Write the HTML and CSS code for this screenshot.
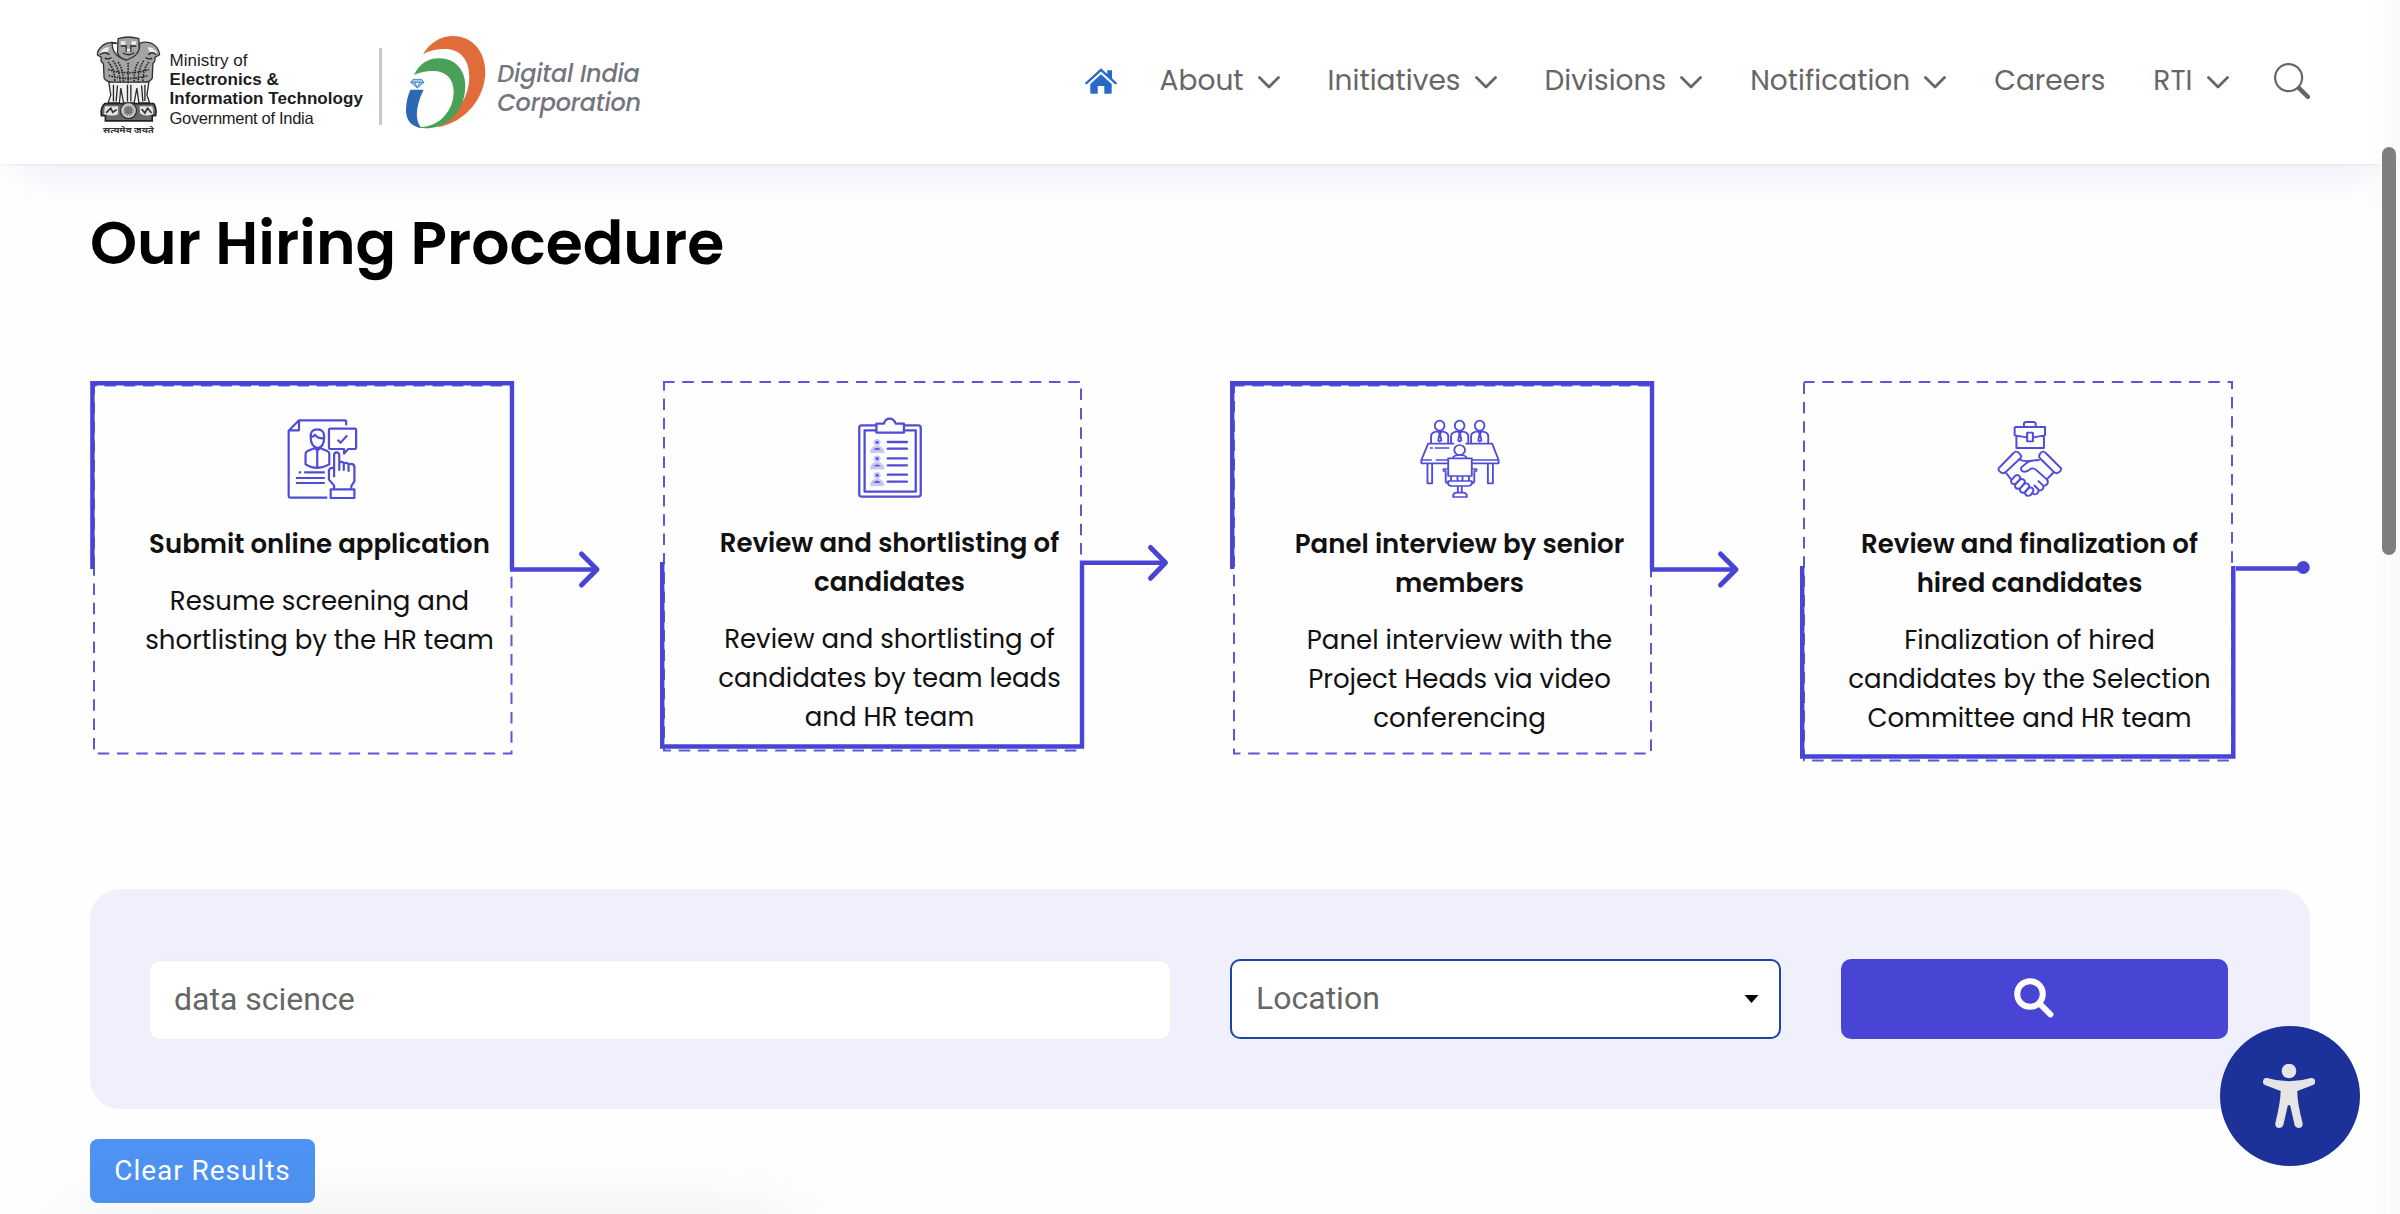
FILE: index.html
```html
<!DOCTYPE html>
<html lang="en">
<head>
<meta charset="utf-8">
<title>Careers | Digital India Corporation</title>
<link rel="stylesheet" href="styles.css">
</head>
<body>
<header class="header">
  <a class="brand">
    <svg class="emblem" viewBox="18 18 194 296">
      <g fill="#a4a4a4" stroke="#333" stroke-width="4">
        <path d="M84 26q30-10 62 0l2 42q-8 22-32 24q-26-2-34-24z"/>
        <path d="M82 40q-26-8-44 6q-18 16-16 28l12 8q-4 14 6 18l2 44q8 12 30 14h84q24-2 30-14l2-44q8-6 6-18l14-8q-2-20-20-32q-18-10-40-2q4 36-40 50q-42-12-42-50z"/>
        <path fill="#f0f0f0" d="M56 156l6 38-8 24h34l4-44 8 44h32l8-44 6 44h32l-8-24 6-38z"/>
      </g>
      <g fill="#ededed"><path d="M30 66q12-16 28-14l-6 14q-12 0-18 10zM200 66q-12-16-28-14l6 14q12 0 18 10zM92 34h14v10H92zM124 34h14v10h-14zM106 56h18v8h-18z"/></g>
      <g fill="none" stroke="#2a2a2a" stroke-width="4">
        <path d="M92 48h18m10 0h18M98 68q17 12 34 0M108 50v16m14-16v16M30 74q14-12 28 0M174 74q12-12 24 0M44 84q10 6 20-2M166 82q10 8 20 2"/>
        <path stroke-width="5" stroke-dasharray="5 3" d="M54 96q20 20 20 58M68 92q20 24 22 64M84 96q16 24 16 62M114 98v62M144 96q-14 24-12 62M160 92q-16 26-16 64M176 96q-18 20-18 58M54 118q60 20 122 0M56 136q58 18 118 0"/>
        <path d="M70 164v50M82 166l-4 48M112 164v50M122 164v50M154 166l4 48M164 164v48"/>
      </g>
      <path fill="#6a6a6a" stroke="#222" stroke-width="5" d="M44 220h146q10 12 6 36h-10v16H46v-16H34q-4-24 10-36z"/>
      <path fill="#e4e4e4" d="M44 228h40v24q-14 8-42 0zM148 228h38q6 12 2 24q-24 8-38-2z"/>
      <path fill="none" stroke="#333" stroke-width="5" d="M48 248l14-14 6 12 12-8M154 236l10 12 8-14 12 14"/>
      <circle cx="115" cy="241" r="24" fill="#cfcfcf" stroke="#333" stroke-width="4"/>
      <circle cx="115" cy="241" r="12" fill="#777" stroke="#777" stroke-width="10" stroke-dasharray="2 3"/>
      <text class="motto" x="115" y="307" text-anchor="middle" textLength="152" lengthAdjust="spacingAndGlyphs">सत्यमेव जयते</text>
    </svg>
    <span class="ministry">
      <span>Ministry of</span>
      <b>Electronics &amp;</b>
      <b>Information Technology</b>
      <span class="gov">Government of India</span>
    </span>
    <span class="divider"></span>
    <svg class="mark" viewBox="940 14 250 284">
      <path fill="#e06c3b" d="M1000 72C1020 38 1052 17 1090 17C1150 17 1187 66 1187 124C1187 200 1130 276 1042 291C1100 256 1139 200 1139 140C1139 88 1112 56 1066 56C1040 56 1020 60 1000 72Z"/>
      <path fill="#49a157" d="M973 134C988 102 1014 84 1048 84C1098 84 1127 120 1127 166C1127 236 1080 294 1006 294Q988 294 974 288C1040 300 1092 246 1092 184C1092 146 1070 122 1030 122C1008 122 990 126 973 134Z"/>
      <path fill="#2b6ab3" d="M962 178H1002C988 206 980 236 982 260Q984 280 994 292C962 290 948 266 949 236Q950 206 962 178Z"/>
      <path fill="#a5c9ea" stroke="#4a8cc8" stroke-width="3" d="M970 147h26l7 9-20 17-20-17zM963 156h40M976 156l7 17 7-17"/>
    </svg>
    <span class="corp">Digital India<br>Corporation</span>
  </a>
  <nav class="nav">
    <a class="home"><svg viewBox="0 0 32 26"><path d="M16 .3 22.300 6V2.200h4.700v8l4.600 4.300q.7.900-.1 1.600t-1.700 0L16 3.500 2.200 16.100q-.9.700-1.700 0t-.1-1.600z"/><path d="M16 6.200 26.700 16v8.700q0 1.100-1.100 1.100h-6.300V18h-6.600v7.800H6.400q-1.100 0-1.100-1.100V16z"/></svg></a>
    <a class="item">About<svg class="chev" viewBox="0 0 22 13"><path d="M1.500 1.500 11 11l9.500-9.500"/></svg></a>
    <a class="item">Initiatives<svg class="chev" viewBox="0 0 22 13"><path d="M1.500 1.500 11 11l9.500-9.500"/></svg></a>
    <a class="item">Divisions<svg class="chev" viewBox="0 0 22 13"><path d="M1.500 1.500 11 11l9.500-9.500"/></svg></a>
    <a class="item">Notification<svg class="chev" viewBox="0 0 22 13"><path d="M1.500 1.500 11 11l9.500-9.500"/></svg></a>
    <a class="item">Careers</a>
    <a class="item">RTI<svg class="chev" viewBox="0 0 22 13"><path d="M1.500 1.500 11 11l9.500-9.500"/></svg></a>
    <a class="find"><svg viewBox="0 0 16 16"><path d="M11.742 10.344a6.500 6.500 0 1 0-1.397 1.398h-.001q.044.060.098.115l3.850 3.850a1 1 0 0 0 1.415-1.414l-3.850-3.850a1 1 0 0 0-.115-.1zM12 6.500a5.500 5.500 0 1 1-11 0 5.500 5.500 0 0 1 11 0"/></svg></a>
  </nav>
</header>

<main class="main">
  <h1>Our Hiring Procedure</h1>

  <section class="steps">
    <article class="step">
      <svg class="frame" viewBox="0 0 570 381">
        <path class="dash" d="M4 186V4.500H421.500V372.500H4V186"/>
        <path class="solid" d="M2.400 188V2.200H422V188.500"/>
        <path class="solid" d="M420 188.500H507"/>
        <path class="tip" d="M491.500 173 507 188.500 491.500 204"/>
      </svg>
      <div class="copy">
        <svg class="icon" viewBox="575 144 244 252" preserveAspectRatio="none">
          <path d="M773 166v-11q0-4-5-4H636l-30 31v195q0 6 6 6h106M636 151v30h-30"/>
          <path d="M727 176h71q4 0 4 4v53q0 4-4 4h-19l-12 14v-14h-40q-4 0-4-4v-53q0-4 4-4zM748 209l9 9 19-22"/>
          <path d="M670 202q-2-24 19-24t20 24q0 30-19 32q-20-4-20-32zM671 201q8 0 11-7 8 12 26 11M682 234l-21 9q-6 3-6 9v31q32 21 69 0v-31q0-6-6-9l-21-9-8 8zM689 241v52"/>
          <path d="M635 307h7m9 0h60m-84 17h84m-84 15h84"/>
          <path d="M738 322v-66q0-9 7-9t8 9v44-22q12-6 13 4v18-19q12-6 14 4v18-20q14-4 17 6v45l-9 14v12M738 356v-9l-15-18v-28q2-8 15-8M728 358h69v26h-69z"/>
        </svg>
        <h2>Submit online application</h2>
        <p>Resume screening and<br>shortlisting by the HR team</p>
      </div>
    </article>

    <article class="step raised">
      <svg class="frame" viewBox="0 0 570 381">
        <rect class="dash" x="4" y="1" width="417" height="368.500"/>
        <path class="solid" d="M2.200 181V365.500H422V181.800H504"/>
        <path class="tip" d="M490.500 166.500 505.500 181.800 490.500 197.300"/>
      </svg>
      <div class="copy">
        <svg class="icon" viewBox="582.500 142 235 252" preserveAspectRatio="none">
          <path d="M661 167h-40q-7 0-7 7v200q0 7 7 7h158q7 0 7-7V174q0-7-7-7h-39M661 182h-32v184h143V182h-32"/>
          <path d="M662 162h21q4-15 16-15t17 15h23v27h-77z"/>
          <g class="pale"><circle cx="664" cy="218" r="9"/><path d="M645 249q1-20 19-20t19 20z"/><circle cx="664" cy="267" r="9"/><path d="M645 298q1-20 19-20t19 20z"/><circle cx="664" cy="317" r="9"/><path d="M645 348q1-20 19-20t19 20z"/></g>
          <g class="fill"><circle cx="664" cy="218" r="4"/><path d="M654 240q10-11 20 0z"/><circle cx="664" cy="267" r="4"/><path d="M654 290q10-11 20 0z"/><circle cx="664" cy="317" r="4"/><path d="M654 339q10-11 20 0z"/></g>
          <path class="thick" d="M694 217h53m-53 20h53m-53 29h53m-53 21h53m-53 28h53m-53 21h53"/>
        </svg>
        <h2>Review and shortlisting of<br>candidates</h2>
        <p>Review and shortlisting of<br>candidates by team leads<br>and HR team</p>
      </div>
    </article>

    <article class="step">
      <svg class="frame" viewBox="0 0 570 381">
        <rect class="dash" x="4" y="4.500" width="417" height="368"/>
        <path class="solid" d="M2.200 188V2.200H422V188.500"/>
        <path class="solid" d="M420 188.500H504"/>
        <path class="tip" d="M490.500 173 506 188.500 490.500 204"/>
      </svg>
      <div class="copy">
        <svg class="icon thin" viewBox="582.500 144 235 252" preserveAspectRatio="none">
          <ellipse cx="643" cy="167" rx="13.500" ry="15"/><ellipse cx="699" cy="167" rx="13.500" ry="15"/><ellipse cx="755" cy="167" rx="13.500" ry="15"/>
          <path d="M619 220v-22q0-14 24-14t24 14v22M675 220v-22q0-14 24-14t24 14v22M731 220v-22q0-14 24-14t24 14v22"/>
          <path d="M639 185l4 6-4 20 4 4 5-4-4-20 4-6M695 185l4 6-4 20 4 4 5-4-4-20 4-6M751 185l4 6-4 20 4 4 5-4-4-20 4-6"/>
          <path d="M684 221h-73l-19 49v10h75M715 221h75l18 49v10h-75M592 270h29m11 0h34M733 270h75M616 234h8m5 0h41M609 281v59h13v-59M778 281v59h14v-59"/>
          <ellipse cx="699" cy="240" rx="15" ry="15"/>
          <path d="M680 263q4-8 19-8t20 8M667 265h66v53h-66zM667 297h-13v6h6v30q0 6 7 7M733 297h13v6h-6v30q0 6-7 7M675 318v15h50v-15M693 319v13M707 319v13M667 333h66v9q-3 6-10 6h-46q-8 0-10-6zM694 349v18M705 349v18M681 381v-6q2-7 10-7h17q9 0 11 7v6z"/>
        </svg>
        <h2>Panel interview by senior<br>members</h2>
        <p>Panel interview with the<br>Project Heads via video<br>conferencing</p>
      </div>
    </article>

    <article class="step">
      <svg class="frame" viewBox="0 0 570 381">
        <rect class="dash" x="4" y="1" width="428" height="378.500"/>
        <path class="solid" d="M2.200 185V375.500H433.300V185"/>
        <path class="solid" d="M436 187.500H503"/>
        <circle class="dot" cx="503.300" cy="186.500" r="6.500"/>
      </svg>
      <div class="copy">
        <svg class="icon" viewBox="582.500 144 235 252" preserveAspectRatio="none">
          <path class="mid" d="M657 171h85v25l-33 6M691 202l-34-6v-25M662 198v36h77v-36M683 170v-8q0-6 7-6h19q7 0 7 6v8M692 188h16v26h-16z"/>
          <path class="mid" d="M654 249q5-6 11-3t10 11q2 5-4 10l-40 40q-6 5-13 0t-6-12zM744 249q-5-6-11-3t-7 11q-2 5 4 10l38 40q6 5 13 0t6-12z"/>
          <path class="mid" d="M668 267q12 8 28 6l30-3M632 308q4 4 16 22M767 306l-20 22M727 270q-26 0-38 10l-13 12q-3 6 2 11 10 6 22-5 8-6 16 1l31 29q6 8 0 15-5 6-12 3M722 332l15 15q2 8-3 12-6 4-11 0M711 345l13 14q0 10-6 13-6 3-11-2"/>
          <path class="mid" d="M649 329l10-12q7-5 12 2 4 5-2 12l-9 10q-8 4-12-3-2-5 1-9zM660 342l13-14q8-3 12 4 2 5-3 11l-10 12q-8 4-13-3-2-5 1-10zM673 354l12-13q8-3 12 4 2 5-3 11l-9 11q-8 4-12-3-2-6 0-10zM687 366l10-12q7-4 12 3 2 5-3 12l-4 6q-9 6-15-2-1-4 0-7z"/>
        </svg>
        <h2>Review and finalization of<br>hired candidates</h2>
        <p>Finalization of hired<br>candidates by the Selection<br>Committee and HR team</p>
      </div>
    </article>
  </section>

  <form class="search">
    <input class="keyword" type="text" value="data science" aria-label="Keyword">
    <div class="location"><span>Location</span><svg viewBox="0 0 14 8"><path d="M0 0h14L7 8z"/></svg></div>
    <button class="submit" type="button" aria-label="Search"><svg viewBox="0 0 40 40"><circle cx="16" cy="16" r="12.800"/><path d="M26.500 26.500 36.500 36.500"/></svg></button>
  </form>

  <button class="clear" type="button">Clear Results</button>
</main>

<div class="status-glow"></div>
<button class="access" type="button" aria-label="Accessibility options"><svg viewBox="246 612 157 192"><circle cx="324" cy="633" r="22"/><path d="M258 654Q324 674 390 654Q402 653 403 664Q403 671 396 675L349 693Q348 724 365 790Q366 804 353 804Q344 804 341 796L328 738Q324 732 320 738L307 796Q304 804 295 804Q282 804 283 790Q299 724 299 693L252 675Q245 671 246 664Q247 653 258 654Z"/></svg></button>
<div class="track"><div class="thumb"></div></div>
</body>
</html>
```
FILE: styles.css
```css
* { box-sizing: border-box; }
html, body { height: 100%; overflow: hidden; }
body { margin: 0; background: #fefefe; color: #111; font-family: Poppins, Inter, sans-serif; }
svg { display: block; }

/* Header */
.header { display: flex; justify-content: space-between; height: 164px; padding: 0 90px 0 96px; background: #fff; position: relative; box-shadow: 0 24px 40px -18px rgba(90, 60, 190, .11), 0 1px 2px rgba(0, 0, 0, .06); }
.brand { display: flex; align-items: flex-start; }
.emblem { width: 65px; height: 99px; margin-top: 36px; }
.motto { font: 700 24px "Noto Sans", sans-serif; fill: #333; }
.ministry { display: flex; flex-direction: column; margin: 51px 0 0 8.500px; width: 209.500px; font: 17px/19.200px "Liberation Sans", Arial, sans-serif; letter-spacing: .05px; color: #1c1c1c; white-space: nowrap; }
.gov { font-size: 16.500px; letter-spacing: -.3px; }
.divider { width: 2.500px; height: 77px; margin-top: 48px; background: #c9c9c9; }
.mark { width: 83.300px; height: 94.700px; margin: 34.700px 0 0 21.500px; }
.corp { margin: 58.500px 0 0 11px; font-size: 24px; font-style: italic; font-weight: 500; line-height: 29.700px; letter-spacing: -.25px; color: #74757e; white-space: nowrap; }

.nav { display: flex; align-items: center; gap: 48px; padding-bottom: 2px; font-size: 28px; line-height: 42px; color: #666; }
.home { margin-right: -5px; }
.home svg { width: 32px; height: 26px; fill: #2a69c8; }
.item { display: flex; align-items: center; gap: 14px; letter-spacing: .04px; white-space: nowrap; }
.chev { width: 22px; height: 13px; margin-top: 2px; fill: none; stroke: #666; stroke-width: 2.800; stroke-linecap: round; stroke-linejoin: round; }
.find { margin: -1px 0 0 -2.500px; }
.find svg { width: 36px; height: 36px; fill: #666; }

/* Hiring steps */
.main { padding: 34px 90px 0; }
h1 { margin: 0 0 93px; font-size: 60px; font-weight: 600; line-height: 90px; color: #000; }
.steps { display: grid; grid-template-columns: repeat(4, 570px); height: 381px; margin-bottom: 127px; }
.step { display: grid; }
.frame, .copy { grid-area: 1 / 1; }
.frame { width: 570px; height: 381px; overflow: visible; fill: none; }
.dash { stroke: #5a57da; stroke-width: 2; stroke-dasharray: 11.500 7.800; stroke-dashoffset: 1; }
.solid { stroke: #4845d4; stroke-width: 4.400; }
.tip { stroke: #4845d4; stroke-width: 5; stroke-linecap: round; stroke-linejoin: round; }
.dot { fill: #4845d4; }
.copy { width: 400px; margin: 37px 0 0 29.500px; text-align: center; font-size: 26px; line-height: 39px; white-space: nowrap; }
.raised .copy { margin-top: 36px; }
.icon { width: 84px; height: 84px; margin: 0 auto 23px; fill: none; stroke: #4f4cd8; stroke-width: 6.400; stroke-linejoin: round; }
.icon.thin { stroke-width: 5.200; }
.icon .mid { stroke-width: 5.600; }
.icon .thick { stroke-width: 7; stroke-linecap: round; }
.icon .pale { fill: #c9c5f7; stroke: #c9c5f7; stroke-width: 2; }
.icon .fill { fill: #4f4cd8; stroke: none; }
h2 { margin: 0 0 18px; font-size: 26px; font-weight: 600; line-height: 39px; }
p { margin: 0; }

/* Search */
.search { display: flex; gap: 60px; height: 220px; padding: 70px 0 70px 60px; border-radius: 30px; background: #f0f0fd; }
.keyword, .location { height: 80px; border-radius: 10px; background: #fff; font: 32px Roboto, sans-serif; color: #666; }
.keyword { width: 1020px; padding: 0 24px; border: 0; box-shadow: inset 0 2px 0 #eee; outline: 0; }
.location { display: flex; align-items: center; justify-content: space-between; width: 551px; padding: 0 20px 2px 24px; border: 2px solid #1b45a8; }
.location svg { width: 15px; height: 8px; margin-top: 2px; }
.submit { display: flex; align-items: center; justify-content: center; width: 387px; height: 80px; padding: 0 2px 2px 0; border: 0; border-radius: 10px; background: #4845d4; }
.submit svg { width: 40px; height: 40px; fill: none; stroke: #fff; stroke-width: 6; stroke-linecap: round; }
.clear { display: block; width: 225px; height: 64px; margin-top: 30px; padding: 0 0 2px; border: 0; border-radius: 8px; background: #4e93f3; color: #fff; font: 28px Roboto, sans-serif; letter-spacing: .96px; }

/* Floating layers */
.status-glow { position: fixed; left: 90px; bottom: -60px; width: 690px; height: 40px; box-shadow: 0 0 80px 10px rgba(40, 60, 60, .11); }
.access { position: fixed; left: 2220px; top: 1026px; width: 140px; height: 140px; padding: 0 0 0 42.500px; border: 0; border-radius: 50%; background: #1c3199; }
.access svg { width: 52.300px; height: 64px; fill: #e5e5e5; }
.track { position: fixed; top: 0; right: 0; width: 32px; height: 100%; background: linear-gradient(90deg, rgba(250, 250, 250, 0), rgba(249, 249, 249, .9)); }
.thumb { width: 14px; height: 408px; margin: 147px 0 0 14px; border-radius: 7px; background: #7f7f7f; }
```
